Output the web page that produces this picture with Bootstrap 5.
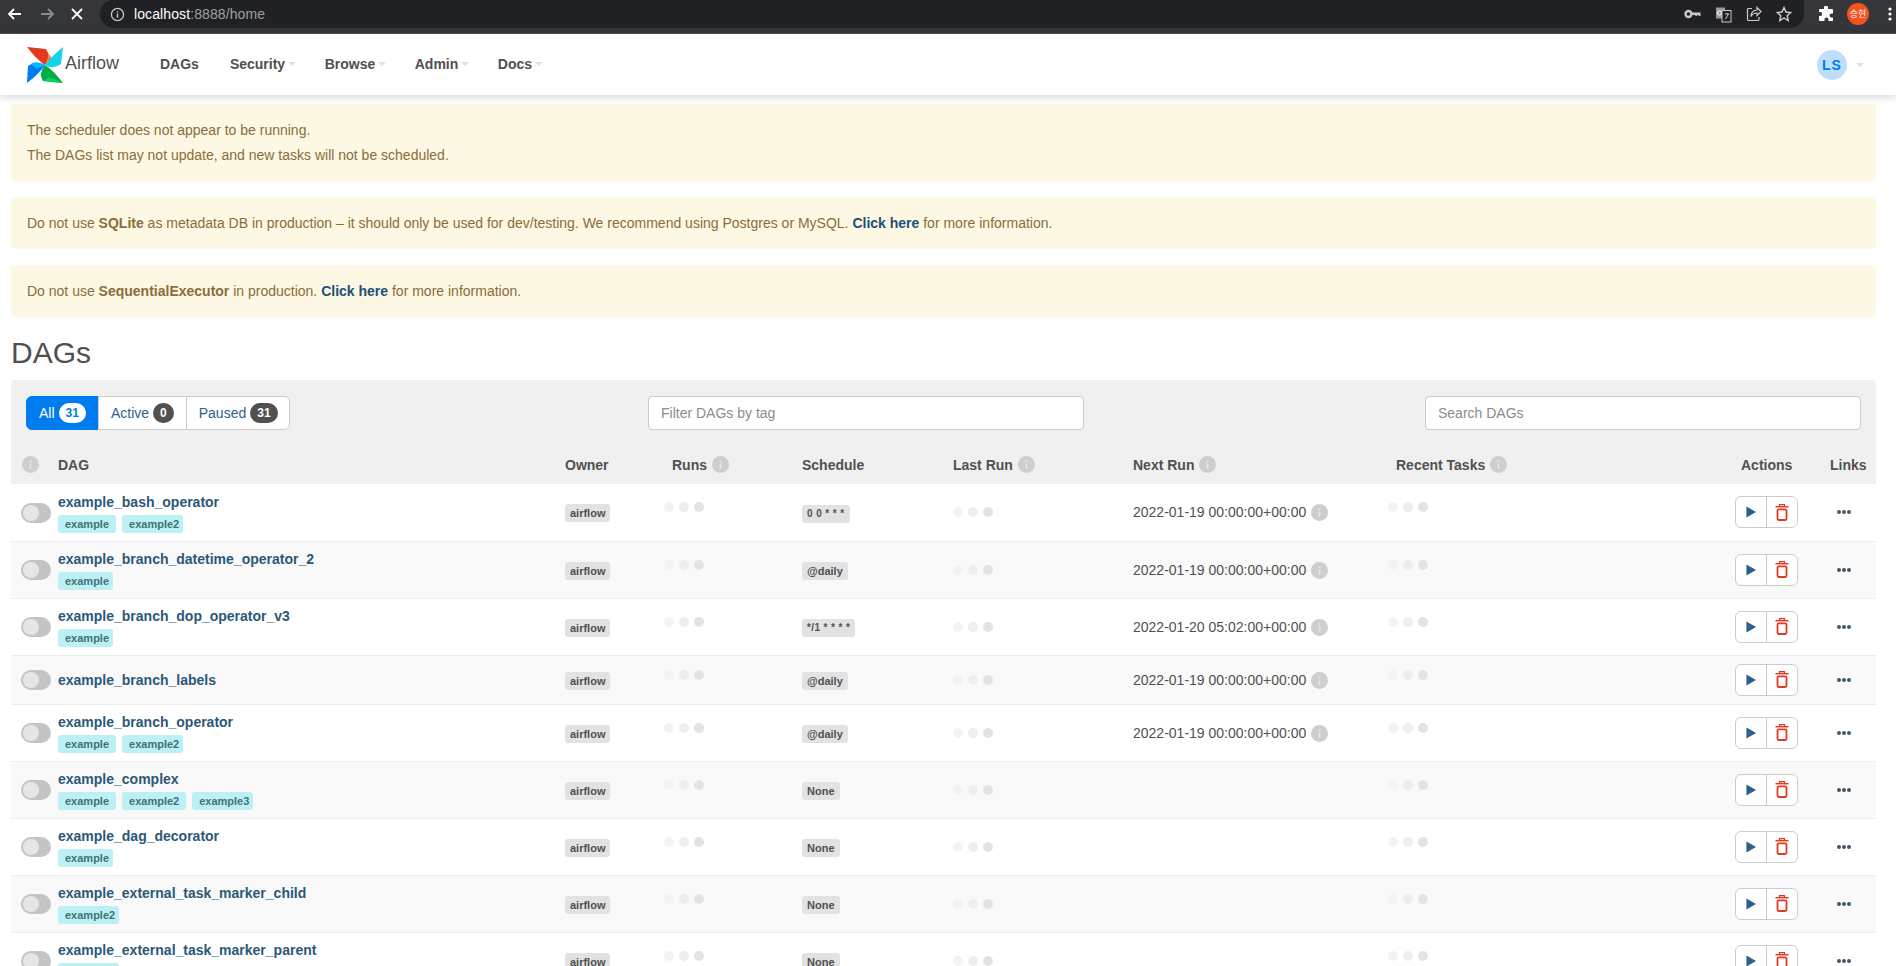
<!DOCTYPE html>
<html lang="en">
<head>
<meta charset="utf-8">
<title>Airflow</title>
<link href="https://cdn.jsdelivr.net/npm/bootstrap@5.3.0/dist/css/bootstrap.min.css" rel="stylesheet">
<style>
html,body{height:966px;overflow:hidden;background:#fff}
body{font-family:"Liberation Sans",Arial,sans-serif;font-size:14px;line-height:20px;color:#51504f}
.defs{width:0;height:0;position:absolute}
.chromebar{height:34px;background:#35363a;border-bottom:1px solid #4a4a4a;align-items:flex-start}
.chromebar svg{display:block;flex:none}
.navbtns{width:100px;height:28px;padding-left:6px;gap:8px}
.omni{width:1704px;height:28px;background:#202124;border-radius:0 0 14px 14px;border-top-left-radius:14px;padding:0 12px 0 10px}
.omni .url{margin-left:9px;color:#9aa0a6;font-size:14px;letter-spacing:.1px}
.omni .url b{font-weight:400;color:#fff}
.omni .tools{gap:14px}
.chromeright{height:28px;padding-left:14px;gap:13px}
.profile{width:22px;height:22px;border-radius:50%;background:#f4511e;color:#fff;font-family:"Noto Sans CJK KR","Liberation Sans",sans-serif;font-size:9px;line-height:22px;text-align:center;flex:none}
.topnav{height:61px;padding:0 32px 0 27px;background:#fff;box-shadow:0 2px 8px rgba(0,0,0,.16);position:relative;z-index:2}
.topnav .navbar-brand{margin:0;padding:0;width:118px;display:flex;align-items:center;gap:2px;font-size:18px;color:#51504f;line-height:20px}
.topnav .brandtext{margin-top:-3px}
.topnav .navbar-nav{margin:-2px 0 0 7px}
.topnav .nav-link{font-weight:700;font-size:14px;color:#51504f;padding:0;margin-right:12.500px;display:flex;align-items:center}
.topnav .nav-link.plainlink{margin-right:15px}
.dropdown-toggle::after{color:#e5dbe9;border-top-width:4px;border-left-width:4px;border-right-width:4px;margin-left:3px;vertical-align:middle}
.usercirc{width:30px;height:30px;border-radius:50%;background:#bfdefb;color:#017cee;font-weight:700;font-size:14px;letter-spacing:1px;line-height:30px;text-align:center;display:inline-block}
.usermenu{color:#51504f;display:flex;align-items:center;padding:0;margin:0}
.usermenu::after{margin-left:9px}
.mainwrap{padding:9px 20px 0 11px}
.alert.notice{background:#fcf8e3;color:#8a6d3b;border:0;border-radius:4px;padding:16px;margin-bottom:16px;font-size:14px;line-height:20px}
.notice p{margin:0 0 5px}
.notice p:last-child{margin:0}
.notice a{color:#1d4f78;font-weight:700;text-decoration:none}
.pagetitle{font-size:30px;line-height:36px;font-weight:400;color:#51504f;margin:18px 0 9px}
.dagpanel{background:#f0f0f0;border-radius:4px 4px 0 0}
.filterrow{padding:16px 15px 0}
.leftzone{width:622px;flex:none}
.btn-group .tabbtn{height:34px;background:#fff;border:1px solid #ccc;color:#2f5f87;font-size:14px;line-height:20px;padding:6px 12px;display:flex;align-items:center;gap:4px}
.btn-group .tabbtn.activebtn{background:#017cee;border-color:#017cee;color:#fff}
.btn-group .tabbtn:last-child{padding-right:11px}
.cnt{background:#51504f;color:#fff;font-size:12px;font-weight:700;line-height:14px;padding:3px 7px;border-radius:10px}
.activebtn .cnt{background:#fff;color:#017cee}
.searchbox{width:436px;height:34px;font-size:14px;padding:6px 12px;border:1px solid #ccc;border-radius:4px;color:#51504f}
.searchbox::placeholder{color:#8c8c8c}
.dagtable{table-layout:fixed;width:1865px;margin:0;--bs-table-bg:transparent;color:#51504f;border-color:#eee}
.dagtable th{height:54px;vertical-align:bottom;padding:0 0 9px;border:0;font-size:14px;font-weight:700;color:#51504f;white-space:nowrap}
.dagtable th svg{vertical-align:-3px;margin-left:1px}
.dagtable td{padding:0;vertical-align:middle;border-bottom:1px solid #eee;background:#fff;color:#51504f}
.dagtable tbody tr:nth-child(even) td{background:#f9f9f9}
.w0{width:47px}.w1{width:507px}.w2{width:99px}.w3{width:138px}.w4{width:151px}.w5{width:180px}.w6{width:255px}.w7{width:347px}.w8{width:95px}.w9{width:46px}
.pad8{padding-left:8px!important}
.pad6{padding-left:6px!important}
.tall td{height:57px}
.short td{height:49px}
.switchy{width:30px;height:20px;border-radius:10px;background:#c4c4c4;margin:1px 0 0 10px;position:relative}
.switchy::before{content:"";position:absolute;left:2px;top:2px;width:16px;height:16px;border-radius:50%;background:#e6e6e6}
.dagname{display:block;color:#2c5878;font-weight:700;font-size:14px;line-height:20px;text-decoration:none}
.taglist{display:flex;gap:6px;margin-top:3px}
.badge.tagchip{background:#bdf0f5;color:#3e7373;font-size:11px;font-weight:700;line-height:18px;height:18px;padding:0 7px;border-radius:3px}
.badge.tagchip:last-child{padding-right:4px}
.badge.grey{background:#e2e2e2;color:#51504f;font-size:11px;font-weight:700;line-height:18px;height:18px;padding:0 5px;border-radius:3px;display:inline-block}
.badge.grey.cron{font-size:10px;letter-spacing:.4px}
.dots{display:flex;gap:5px}
.dots i{display:block;width:10px;height:10px;border-radius:50%;background:#f3f3f3}
.dots i:nth-child(2){background:#eeeeee}
.dots i:nth-child(3){background:#e3e3e3}
.uptop{margin-top:-10px}
td .nextinfo{vertical-align:-4px;margin-left:1px}
.btn-group .actbtn{width:32px;height:32px;padding:0;background:#fff;border:1px solid #ccc;display:flex;align-items:center;justify-content:center}
.morelink{display:flex;gap:1px;margin-left:7px}
.morelink i{display:block;width:4px;height:4px;border-radius:50%;background:#44566a}
</style>
</head>
<body>
<svg class="defs" aria-hidden="true">
  <symbol id="ico-info" viewBox="0 0 16 16"><circle cx="8" cy="8" r="8" fill="#cecece"/><rect x="7.200" y="7" width="1.600" height="5" fill="#e6e6e6"/><rect x="7.200" y="4" width="1.600" height="1.800" fill="#e6e6e6"/></symbol>
  <symbol id="ico-play" viewBox="0 0 12 12"><path d="M0.500 0 L11 6 L0.500 12 Z" fill="#2b5f8c"/></symbol>
  <symbol id="ico-trash" viewBox="0 0 14 17"><path d="M0.500 2.700H13.500" stroke="#e43921" stroke-width="1.500" fill="none"/><path d="M4.500 2.500V0.700H9.500V2.500" stroke="#e43921" stroke-width="1.200" fill="none"/><rect x="2.500" y="5.300" width="9" height="10.700" rx="1.200" stroke="#e43921" stroke-width="1.800" fill="none"/></symbol>
</svg>

<div class="chromebar d-flex">
  <div class="navbtns d-flex align-items-center">
    <svg width="18" height="18" viewBox="0 0 18 18"><path d="M15 9H3M8 4L3 9l5 5" stroke="#fff" stroke-width="1.800" fill="none"/></svg>
    <svg width="18" height="18" viewBox="0 0 18 18" style="margin-left:6px"><path d="M3 9h12M10 4l5 5-5 5" stroke="#8a8b8d" stroke-width="1.800" fill="none"/></svg>
    <svg width="14" height="14" viewBox="0 0 14 14" style="margin-left:6px"><path d="M2 2l10 10M12 2L2 12" stroke="#fff" stroke-width="1.800"/></svg>
  </div>
  <div class="omni d-flex align-items-center">
    <svg width="15" height="15" viewBox="0 0 16 16"><circle cx="8" cy="8" r="6.500" stroke="#c4c7c5" stroke-width="1.400" fill="none"/><path d="M8 7v4.500M8 4.500v1.400" stroke="#c4c7c5" stroke-width="1.500"/></svg>
    <span class="url"><b>localhost</b>:8888/home</span>
    <div class="tools d-flex align-items-center ms-auto">
      <svg width="17" height="16" viewBox="0 0 17 16"><circle cx="4.500" cy="8" r="3" stroke="#c8c8c8" stroke-width="2.400" fill="none"/><path d="M7.500 6.600h9v3.400h-1.800V9h-1.600v1h-1.800V9H7.500z" fill="#c8c8c8"/></svg>
      <svg width="17" height="17" viewBox="0 0 17 17"><rect x="1" y="1.500" width="9" height="11" fill="#9a9a9a"/><rect x="7" y="4.500" width="9" height="11.500" fill="#202124" stroke="#c8c8c8"/><path d="M10 8h4M12 7v1M10.500 13l3-5" stroke="#c8c8c8"/><circle cx="4.500" cy="7" r="2" fill="none" stroke="#fff"/></svg>
      <svg width="16" height="16" viewBox="0 0 16 16"><path d="M11 1.500l4 4-4 4V7C7.500 7 6 8.500 5 10.500 5 7 7 4 11 4z" fill="none" stroke="#c8c8c8" stroke-width="1.200"/><path d="M6 2.500H2.500a1 1 0 0 0-1 1v10a1 1 0 0 0 1 1h9.500a1 1 0 0 0 1-1V11" fill="none" stroke="#c8c8c8" stroke-width="1.200"/></svg>
      <svg width="16" height="16" viewBox="0 0 16 16"><path d="M8 1.500l2 4.500 4.800.5-3.600 3.200 1 4.800L8 12l-4.200 2.500 1-4.800L1.200 6.500 6 6z" fill="none" stroke="#d0d0d0" stroke-width="1.400"/></svg>
    </div>
  </div>
  <div class="chromeright d-flex align-items-center">
    <svg width="16" height="16" viewBox="0 0 16 16"><path d="M6 1.500a2 2 0 0 1 4 0V3h4a1 1 0 0 1 1 1v3.500h-1.500a2 2 0 0 0 0 4H15V15H10.500v-1.500a2 2 0 0 0-4 0V15H2a1 1 0 0 1-1-1V10h1.200a2 2 0 0 0 0-4H1V4a1 1 0 0 1 1-1h4z" fill="#fff"/></svg>
    <div class="profile">승현</div>
    <svg width="4" height="14" viewBox="0 0 4 14" style="margin-left:6px"><circle cx="2" cy="2" r="1.600" fill="#fff"/><circle cx="2" cy="7" r="1.600" fill="#fff"/><circle cx="2" cy="12" r="1.600" fill="#fff"/></svg>
  </div>
</div>

<nav class="navbar navbar-expand topnav">
  <a class="navbar-brand" href="#">
    <svg width="36" height="36" viewBox="0 0 36 36">
      <path d="M0 0 L19 2 Q24 9 18 18 Q10 13 0 0Z" fill="#e43921"/>
      <path d="M19 2 Q24 9 18 18 L25 12Z" fill="#ff7557"/>
      <path d="M36 0 L34 17 Q26 23 18 18 Q24 10 36 0Z" fill="#11d4e6"/>
      <path d="M0 36 L1 19 Q9 13 18 18 Q13 26 0 36Z" fill="#017cee"/>
      <path d="M18 18 Q9 13 4 17 L10 22Z" fill="#0cb6ff"/>
      <path d="M36 36 L16 34 Q11 27 18 18 Q26 23 36 36Z" fill="#00ad46"/>
      <path d="M36 36 L16 34 L22 30Z" fill="#04d659"/>
    </svg>
    <span class="brandtext">Airflow</span>
  </a>
  <ul class="navbar-nav">
    <li class="nav-item"><a class="nav-link plainlink" href="#">DAGs</a></li>
    <li class="nav-item"><a class="nav-link dropdown-toggle" href="#">Security</a></li>
    <li class="nav-item"><a class="nav-link dropdown-toggle" href="#">Browse</a></li>
    <li class="nav-item"><a class="nav-link dropdown-toggle" href="#">Admin</a></li>
    <li class="nav-item"><a class="nav-link dropdown-toggle" href="#">Docs</a></li>
  </ul>
  <a class="usermenu dropdown-toggle ms-auto text-decoration-none" href="#"><span class="usercirc">LS</span></a>
</nav>

<div class="mainwrap">
  <div class="alert notice" role="alert">
    <p>The scheduler does not appear to be running.</p>
    <p>The DAGs list may not update, and new tasks will not be scheduled.</p>
  </div>
  <div class="alert notice" role="alert">Do not use <strong>SQLite</strong> as metadata DB in production – it should only be used for dev/testing. We recommend using Postgres or MySQL. <a href="#">Click here</a> for more information.</div>
  <div class="alert notice" role="alert">Do not use <strong>SequentialExecutor</strong> in production. <a href="#">Click here</a> for more information.</div>

  <h2 class="pagetitle">DAGs</h2>

  <div class="dagpanel">
    <div class="filterrow d-flex">
      <div class="leftzone">
        <div class="btn-group" role="group">
          <a class="btn tabbtn activebtn" href="#">All <span class="cnt">31</span></a>
          <a class="btn tabbtn" href="#">Active <span class="cnt">0</span></a>
          <a class="btn tabbtn" href="#">Paused <span class="cnt">31</span></a>
        </div>
      </div>
      <input class="form-control searchbox" placeholder="Filter DAGs by tag">
      <input class="form-control searchbox ms-auto" placeholder="Search DAGs">
    </div>

    <table class="table dagtable">
      <colgroup><col class="w0"><col class="w1"><col class="w2"><col class="w3"><col class="w4"><col class="w5"><col class="w6"><col class="w7"><col class="w8"><col class="w9"></colgroup>
      <thead>
        <tr>
          <th><svg width="17" height="17" style="margin-left:11px"><use href="#ico-info"/></svg></th>
          <th>DAG</th><th>Owner</th>
          <th class="pad8">Runs <svg width="17" height="17"><use href="#ico-info"/></svg></th>
          <th>Schedule</th>
          <th>Last Run <svg width="17" height="17"><use href="#ico-info"/></svg></th>
          <th>Next Run <svg width="17" height="17"><use href="#ico-info"/></svg></th>
          <th class="pad8">Recent Tasks <svg width="17" height="17"><use href="#ico-info"/></svg></th>
          <th class="pad6">Actions</th><th>Links</th>
        </tr>
      </thead>
      <tbody>
        <tr class="tall">
          <td><div class="switchy"></div></td>
          <td><a class="dagname" href="#">example_bash_operator</a><div class="taglist"><span class="badge tagchip">example</span><span class="badge tagchip">example2</span></div></td>
          <td><span class="badge grey">airflow</span></td>
          <td><div class="dots uptop"><i></i><i></i><i></i></div></td>
          <td><span class="badge grey cron">0 0 * * *</span></td>
          <td><div class="dots"><i></i><i></i><i></i></div></td>
          <td>2022-01-19 00:00:00+00:00 <svg class="nextinfo" width="17" height="17"><use href="#ico-info"/></svg></td>
          <td><div class="dots uptop"><i></i><i></i><i></i></div></td>
          <td><div class="btn-group"><a class="btn actbtn" href="#"><svg width="11" height="12"><use href="#ico-play"/></svg></a><a class="btn actbtn" href="#"><svg width="14" height="17"><use href="#ico-trash"/></svg></a></div></td>
          <td><a class="morelink" href="#"><i></i><i></i><i></i></a></td>
        </tr>
        <tr class="tall">
          <td><div class="switchy"></div></td>
          <td><a class="dagname" href="#">example_branch_datetime_operator_2</a><div class="taglist"><span class="badge tagchip">example</span></div></td>
          <td><span class="badge grey">airflow</span></td>
          <td><div class="dots uptop"><i></i><i></i><i></i></div></td>
          <td><span class="badge grey">@daily</span></td>
          <td><div class="dots"><i></i><i></i><i></i></div></td>
          <td>2022-01-19 00:00:00+00:00 <svg class="nextinfo" width="17" height="17"><use href="#ico-info"/></svg></td>
          <td><div class="dots uptop"><i></i><i></i><i></i></div></td>
          <td><div class="btn-group"><a class="btn actbtn" href="#"><svg width="11" height="12"><use href="#ico-play"/></svg></a><a class="btn actbtn" href="#"><svg width="14" height="17"><use href="#ico-trash"/></svg></a></div></td>
          <td><a class="morelink" href="#"><i></i><i></i><i></i></a></td>
        </tr>
        <tr class="tall">
          <td><div class="switchy"></div></td>
          <td><a class="dagname" href="#">example_branch_dop_operator_v3</a><div class="taglist"><span class="badge tagchip">example</span></div></td>
          <td><span class="badge grey">airflow</span></td>
          <td><div class="dots uptop"><i></i><i></i><i></i></div></td>
          <td><span class="badge grey cron">*/1 * * * *</span></td>
          <td><div class="dots"><i></i><i></i><i></i></div></td>
          <td>2022-01-20 05:02:00+00:00 <svg class="nextinfo" width="17" height="17"><use href="#ico-info"/></svg></td>
          <td><div class="dots uptop"><i></i><i></i><i></i></div></td>
          <td><div class="btn-group"><a class="btn actbtn" href="#"><svg width="11" height="12"><use href="#ico-play"/></svg></a><a class="btn actbtn" href="#"><svg width="14" height="17"><use href="#ico-trash"/></svg></a></div></td>
          <td><a class="morelink" href="#"><i></i><i></i><i></i></a></td>
        </tr>
        <tr class="short">
          <td><div class="switchy"></div></td>
          <td><a class="dagname" href="#">example_branch_labels</a></td>
          <td><span class="badge grey">airflow</span></td>
          <td><div class="dots uptop"><i></i><i></i><i></i></div></td>
          <td><span class="badge grey">@daily</span></td>
          <td><div class="dots"><i></i><i></i><i></i></div></td>
          <td>2022-01-19 00:00:00+00:00 <svg class="nextinfo" width="17" height="17"><use href="#ico-info"/></svg></td>
          <td><div class="dots uptop"><i></i><i></i><i></i></div></td>
          <td><div class="btn-group"><a class="btn actbtn" href="#"><svg width="11" height="12"><use href="#ico-play"/></svg></a><a class="btn actbtn" href="#"><svg width="14" height="17"><use href="#ico-trash"/></svg></a></div></td>
          <td><a class="morelink" href="#"><i></i><i></i><i></i></a></td>
        </tr>
        <tr class="tall">
          <td><div class="switchy"></div></td>
          <td><a class="dagname" href="#">example_branch_operator</a><div class="taglist"><span class="badge tagchip">example</span><span class="badge tagchip">example2</span></div></td>
          <td><span class="badge grey">airflow</span></td>
          <td><div class="dots uptop"><i></i><i></i><i></i></div></td>
          <td><span class="badge grey">@daily</span></td>
          <td><div class="dots"><i></i><i></i><i></i></div></td>
          <td>2022-01-19 00:00:00+00:00 <svg class="nextinfo" width="17" height="17"><use href="#ico-info"/></svg></td>
          <td><div class="dots uptop"><i></i><i></i><i></i></div></td>
          <td><div class="btn-group"><a class="btn actbtn" href="#"><svg width="11" height="12"><use href="#ico-play"/></svg></a><a class="btn actbtn" href="#"><svg width="14" height="17"><use href="#ico-trash"/></svg></a></div></td>
          <td><a class="morelink" href="#"><i></i><i></i><i></i></a></td>
        </tr>
        <tr class="tall">
          <td><div class="switchy"></div></td>
          <td><a class="dagname" href="#">example_complex</a><div class="taglist"><span class="badge tagchip">example</span><span class="badge tagchip">example2</span><span class="badge tagchip">example3</span></div></td>
          <td><span class="badge grey">airflow</span></td>
          <td><div class="dots uptop"><i></i><i></i><i></i></div></td>
          <td><span class="badge grey">None</span></td>
          <td><div class="dots"><i></i><i></i><i></i></div></td>
          <td></td>
          <td><div class="dots uptop"><i></i><i></i><i></i></div></td>
          <td><div class="btn-group"><a class="btn actbtn" href="#"><svg width="11" height="12"><use href="#ico-play"/></svg></a><a class="btn actbtn" href="#"><svg width="14" height="17"><use href="#ico-trash"/></svg></a></div></td>
          <td><a class="morelink" href="#"><i></i><i></i><i></i></a></td>
        </tr>
        <tr class="tall">
          <td><div class="switchy"></div></td>
          <td><a class="dagname" href="#">example_dag_decorator</a><div class="taglist"><span class="badge tagchip">example</span></div></td>
          <td><span class="badge grey">airflow</span></td>
          <td><div class="dots uptop"><i></i><i></i><i></i></div></td>
          <td><span class="badge grey">None</span></td>
          <td><div class="dots"><i></i><i></i><i></i></div></td>
          <td></td>
          <td><div class="dots uptop"><i></i><i></i><i></i></div></td>
          <td><div class="btn-group"><a class="btn actbtn" href="#"><svg width="11" height="12"><use href="#ico-play"/></svg></a><a class="btn actbtn" href="#"><svg width="14" height="17"><use href="#ico-trash"/></svg></a></div></td>
          <td><a class="morelink" href="#"><i></i><i></i><i></i></a></td>
        </tr>
        <tr class="tall">
          <td><div class="switchy"></div></td>
          <td><a class="dagname" href="#">example_external_task_marker_child</a><div class="taglist"><span class="badge tagchip">example2</span></div></td>
          <td><span class="badge grey">airflow</span></td>
          <td><div class="dots uptop"><i></i><i></i><i></i></div></td>
          <td><span class="badge grey">None</span></td>
          <td><div class="dots"><i></i><i></i><i></i></div></td>
          <td></td>
          <td><div class="dots uptop"><i></i><i></i><i></i></div></td>
          <td><div class="btn-group"><a class="btn actbtn" href="#"><svg width="11" height="12"><use href="#ico-play"/></svg></a><a class="btn actbtn" href="#"><svg width="14" height="17"><use href="#ico-trash"/></svg></a></div></td>
          <td><a class="morelink" href="#"><i></i><i></i><i></i></a></td>
        </tr>
        <tr class="tall">
          <td><div class="switchy"></div></td>
          <td><a class="dagname" href="#">example_external_task_marker_parent</a><div class="taglist"><span class="badge tagchip">example2</span></div></td>
          <td><span class="badge grey">airflow</span></td>
          <td><div class="dots uptop"><i></i><i></i><i></i></div></td>
          <td><span class="badge grey">None</span></td>
          <td><div class="dots"><i></i><i></i><i></i></div></td>
          <td></td>
          <td><div class="dots uptop"><i></i><i></i><i></i></div></td>
          <td><div class="btn-group"><a class="btn actbtn" href="#"><svg width="11" height="12"><use href="#ico-play"/></svg></a><a class="btn actbtn" href="#"><svg width="14" height="17"><use href="#ico-trash"/></svg></a></div></td>
          <td><a class="morelink" href="#"><i></i><i></i><i></i></a></td>
        </tr>
      </tbody>
    </table>
  </div>
</div>
</body>
</html>
